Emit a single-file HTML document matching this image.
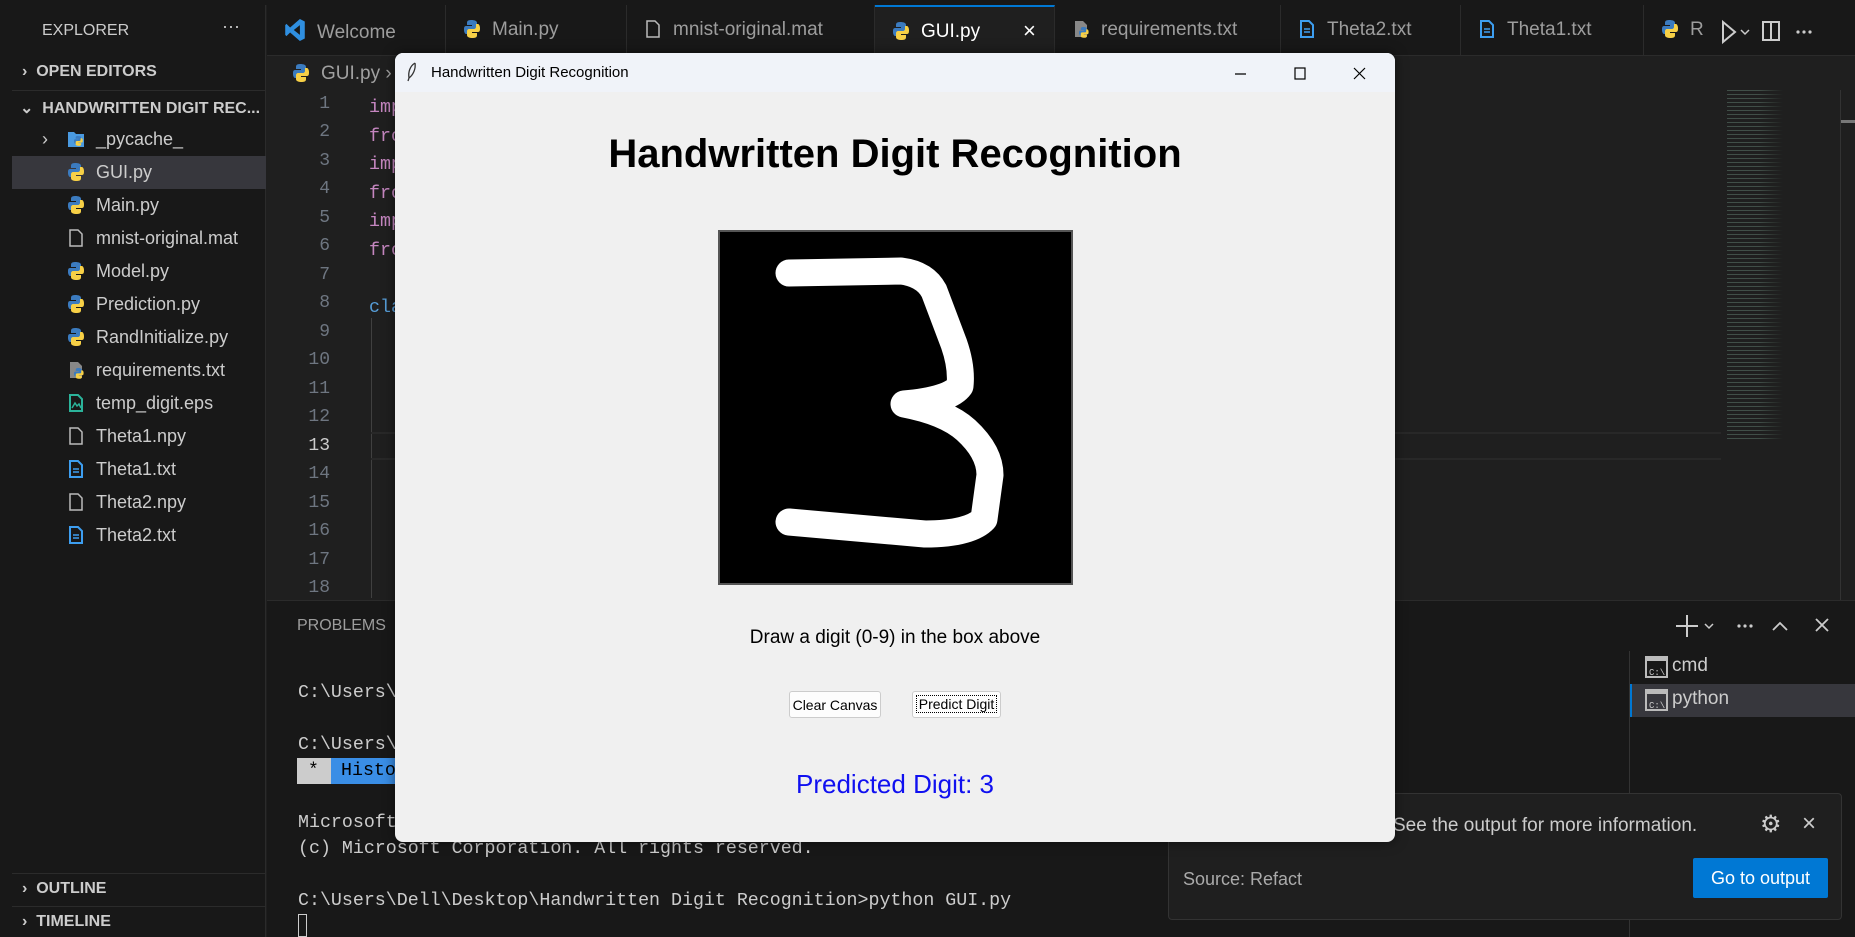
<!DOCTYPE html>
<html><head><meta charset="utf-8"><style>
*{margin:0;padding:0;box-sizing:border-box}
body{width:1855px;height:937px;overflow:hidden;background:#1f1f1f;font-family:"Liberation Sans",sans-serif;position:relative;color:#ccc}
.a{position:absolute}
.t{position:absolute;white-space:nowrap}
.py{display:inline-block;width:16px;height:18px;vertical-align:-3px;margin-right:12px}
.sb{font-size:18px;color:#ccc}
.ln{position:absolute;right:0;width:60px;text-align:right;font-family:"Liberation Mono",monospace;font-size:18px;color:#6e7681}
.mono{font-family:"Liberation Mono",monospace;font-size:18.3px;color:#ccc}
.tab{position:absolute;top:5px;height:51px;border-right:1px solid #2b2b2b;font-size:19px;color:#9d9d9d;padding:14px 0 0 18px;white-space:nowrap}
</style></head><body>
<svg width="0" height="0" style="position:absolute"><defs>
<g id="py"><path d="M7 0C3 0 3 2 3 3v2h5v1H2C0 6 0 8 0 10s1 4 2 4h2v-3c0-1 1-2 2-2h5c1 0 2-1 2-2V3c0-2-2-3-6-3z" fill="#3b7bbf"/><path d="M9 18c4 0 4-2 4-3v-2H8v-1h6c2 0 2-2 2-4s-1-4-2-4h-2v3c0 1-1 2-2 2H5c-1 0-2 1-2 2v4c0 2 2 3 6 3z" fill="#f7d046"/></g>
<g id="fi"><path d="M2 1h8l4 4v12H2z" fill="none" stroke="#bbb" stroke-width="1.5"/></g>
<g id="tx"><path d="M2 1h8l4 4v12H2z" fill="none" stroke="#3d9ef0" stroke-width="2"/><path d="M5 9h6M5 12h6" stroke="#3d9ef0" stroke-width="1.5"/></g>
</defs></svg>
<div class="a" style="left:0;top:0;width:1855px;height:5px;background:#181818"></div>
<div class="a" style="left:0;top:0;width:12px;height:937px;background:#181818"></div>
<div class="a" style="left:12px;top:5px;width:254px;height:932px;background:#181818;border-right:1px solid #2b2b2b"></div>
<div class="t" style="left:42px;top:22px;font-size:16px;color:#ccc">EXPLORER</div>
<div class="t" style="left:222px;top:16px;font-size:18px;color:#ccc">···</div>
<div class="a" style="left:12px;top:90px;width:254px;height:1px;background:#2b2b2b"></div>
<div class="t" style="left:22px;top:63px;font-size:16px;font-weight:bold;color:#ccc">›&nbsp; OPEN EDITORS</div>
<div class="t" style="left:20px;top:98px;font-size:16px;font-weight:bold;color:#ccc">⌄&nbsp; HANDWRITTEN DIGIT REC...</div>
<div class="a" style="left:12px;top:156px;width:254px;height:33px;background:#37373d"></div>
<div class="t sb" style="left:42px;top:129px">›</div>
<div class="t sb" style="left:68px;top:129px"><svg class="py" viewBox="0 0 16 18"><path d="M0 2h6l2 2h8v13H0z" fill="#4a9ae0"/><use href="#py" transform="translate(6 6) scale(.55)"/></svg>_pycache_</div>
<div class="t sb" style="left:68px;top:162px"><svg class="py" viewBox="0 0 16 18"><use href="#py"/></svg>GUI.py</div>
<div class="t sb" style="left:68px;top:195px"><svg class="py" viewBox="0 0 16 18"><use href="#py"/></svg>Main.py</div>
<div class="t sb" style="left:68px;top:228px"><svg class="py" viewBox="0 0 16 18"><use href="#fi"/></svg>mnist-original.mat</div>
<div class="t sb" style="left:68px;top:261px"><svg class="py" viewBox="0 0 16 18"><use href="#py"/></svg>Model.py</div>
<div class="t sb" style="left:68px;top:294px"><svg class="py" viewBox="0 0 16 18"><use href="#py"/></svg>Prediction.py</div>
<div class="t sb" style="left:68px;top:327px"><svg class="py" viewBox="0 0 16 18"><use href="#py"/></svg>RandInitialize.py</div>
<div class="t sb" style="left:68px;top:360px"><svg class="py" viewBox="0 0 16 18"><path d="M2 1h8l4 4v12H2z" fill="#888"/><use href="#py" transform="translate(6 7) scale(.6)"/></svg>requirements.txt</div>
<div class="t sb" style="left:68px;top:393px"><svg class="py" viewBox="0 0 16 18"><path d="M2 1h8l4 4v12H2z" fill="none" stroke="#2bb39a" stroke-width="2"/><path d="M4 14l3-5 2 3 2-2 2 4" stroke="#2bb39a" fill="none" stroke-width="1.5"/></svg>temp_digit.eps</div>
<div class="t sb" style="left:68px;top:426px"><svg class="py" viewBox="0 0 16 18"><use href="#fi"/></svg>Theta1.npy</div>
<div class="t sb" style="left:68px;top:459px"><svg class="py" viewBox="0 0 16 18"><use href="#tx"/></svg>Theta1.txt</div>
<div class="t sb" style="left:68px;top:492px"><svg class="py" viewBox="0 0 16 18"><use href="#fi"/></svg>Theta2.npy</div>
<div class="t sb" style="left:68px;top:525px"><svg class="py" viewBox="0 0 16 18"><use href="#tx"/></svg>Theta2.txt</div>
<div class="a" style="left:12px;top:873px;width:254px;height:1px;background:#2b2b2b"></div>
<div class="a" style="left:12px;top:906px;width:254px;height:1px;background:#2b2b2b"></div>
<div class="t" style="left:22px;top:880px;font-size:16px;font-weight:bold;color:#ccc">›&nbsp; OUTLINE</div>
<div class="t" style="left:22px;top:913px;font-size:16px;font-weight:bold;color:#ccc">›&nbsp; TIMELINE</div>
<div class="a" style="left:267px;top:5px;width:1588px;height:51px;background:#181818;border-bottom:1px solid #2b2b2b"></div>
<div class="tab" style="left:267px;width:179px"><svg class="py" viewBox="0 0 16 18" style="width:20px;height:22px"><path d="M12 0l4 2v14l-4 2L4 11 1 14 0 13V5l1-1 3 3zM12 5L7 9l5 4z" fill="#2f8fe0"/></svg>Welcome</div>
<div class="tab" style="left:446px;width:181px"><svg class="py" viewBox="0 0 16 18"><use href="#py"/></svg>Main.py</div>
<div class="tab" style="left:627px;width:248px"><svg class="py" viewBox="0 0 16 18"><use href="#fi"/></svg>mnist-original.mat</div>
<div class="tab" style="left:875px;width:180px;background:#1f1f1f;color:#fff;border-top:2px solid #0078d4;height:52px"><svg class="py" viewBox="0 0 16 18"><use href="#py"/></svg>GUI.py<span style="position:absolute;left:148px;top:11px;font-size:22px">×</span></div>
<div class="tab" style="left:1055px;width:226px"><svg class="py" viewBox="0 0 16 18"><path d="M2 1h8l4 4v12H2z" fill="#888"/><use href="#py" transform="translate(6 7) scale(.6)"/></svg>requirements.txt</div>
<div class="tab" style="left:1281px;width:180px"><svg class="py" viewBox="0 0 16 18"><use href="#tx"/></svg>Theta2.txt</div>
<div class="tab" style="left:1461px;width:183px"><svg class="py" viewBox="0 0 16 18"><use href="#tx"/></svg>Theta1.txt</div>
<div class="tab" style="left:1644px;width:211px;border:none"><svg class="py" viewBox="0 0 16 18"><use href="#py"/></svg>R</div>
<svg class="a" style="left:1716px;top:18px" width="140" height="28"><path d="M7 4l12 10-12 10z" fill="none" stroke="#ccc" stroke-width="2"/><path d="M25 12l4 4 4-4" fill="none" stroke="#ccc" stroke-width="1.5"/><rect x="47" y="4" width="16" height="18" fill="none" stroke="#ccc" stroke-width="2"/><path d="M55 4v18" stroke="#ccc" stroke-width="2"/><circle cx="82" cy="14" r="1.6" fill="#ccc"/><circle cx="88" cy="14" r="1.6" fill="#ccc"/><circle cx="94" cy="14" r="1.6" fill="#ccc"/></svg>
<div class="t" style="left:293px;top:63px;font-size:19px;color:#a0a0a0"><svg class="py" viewBox="0 0 16 18"><use href="#py"/></svg>GUI.py ›</div>
<div class="a" style="left:270px;top:92px;width:60px;height:508px">
<div class="ln" style="top:2px">1</div><div class="ln" style="top:30px">2</div><div class="ln" style="top:59px">3</div><div class="ln" style="top:87px">4</div><div class="ln" style="top:116px">5</div><div class="ln" style="top:144px">6</div><div class="ln" style="top:173px">7</div><div class="ln" style="top:201px">8</div><div class="ln" style="top:230px">9</div><div class="ln" style="top:258px">10</div><div class="ln" style="top:287px">11</div><div class="ln" style="top:315px">12</div><div class="ln" style="top:344px;color:#ccc">13</div><div class="ln" style="top:372px">14</div><div class="ln" style="top:401px">15</div><div class="ln" style="top:429px">16</div><div class="ln" style="top:458px">17</div><div class="ln" style="top:486px">18</div>
</div>
<div class="t mono" style="left:369px;top:94px;color:#c586c0;line-height:28.5px">imp<br>fro<br>imp<br>fro<br>imp<br>fro<br><br><span style="color:#569cd6">cla</span></div>
<div class="a" style="left:371px;top:318px;width:1px;height:280px;background:#404040"></div>
<div class="a" style="left:371px;top:432px;width:1350px;height:2px;background:#282828"></div>
<div class="a" style="left:371px;top:458px;width:1350px;height:2px;background:#282828"></div>
<div class="a" style="left:1727px;top:90px;width:80px;height:350px;opacity:.45;background:repeating-linear-gradient(180deg,#6a8a7a 0 1px,transparent 1px 4px);-webkit-mask:linear-gradient(90deg,#000 0 40%,transparent 70%)"></div>
<div class="a" style="left:1840px;top:90px;width:15px;height:510px;background:#1f1f1f;border-left:1px solid #333"></div>
<div class="a" style="left:1841px;top:120px;width:14px;height:3px;background:#777"></div>
<div class="a" style="left:267px;top:600px;width:1588px;height:337px;background:#181818;border-top:1px solid #2b2b2b"></div>
<div class="t" style="left:297px;top:617px;font-size:16px;color:#9d9d9d">PROBLEMS</div>
<div class="t mono" style="left:298px;top:683px">C:\Users\</div>
<div class="t mono" style="left:298px;top:735px">C:\Users\</div>
<div class="a" style="left:297px;top:758px;width:34px;height:26px;background:#ccc;color:#000;font-family:'Liberation Mono';font-size:18px;padding:3px 0 0 11px">*</div>
<div class="a mono" style="left:331px;top:758px;width:80px;height:26px;background:#3a8ee6;color:#000;padding:3px 0 0 10px">Histo</div>
<div class="t mono" style="left:298px;top:813px">Microsoft</div>
<div class="t mono" style="left:298px;top:839px">(c) Microsoft Corporation. All rights reserved.</div>
<div class="t mono" style="left:298px;top:891px">C:\Users\Dell\Desktop\Handwritten Digit Recognition&gt;python GUI.py</div>
<div class="a" style="left:298px;top:914px;width:9px;height:23px;border:1px solid #ccc"></div>
<svg class="a" style="left:1675px;top:610px" width="175" height="32"><path d="M12 5v22M1 16h22" stroke="#ccc" stroke-width="2"/><path d="M30 14l4 4 4-4" fill="none" stroke="#ccc" stroke-width="1.5"/><circle cx="64" cy="16" r="1.6" fill="#ccc"/><circle cx="70" cy="16" r="1.6" fill="#ccc"/><circle cx="76" cy="16" r="1.6" fill="#ccc"/><path d="M98 20l7-7 7 7" fill="none" stroke="#ccc" stroke-width="1.8"/><path d="M141 9l12 12M153 9l-12 12" stroke="#ccc" stroke-width="1.8"/></svg>
<div class="a" style="left:1629px;top:651px;width:1px;height:286px;background:#333"></div>
<div class="a" style="left:1630px;top:684px;width:225px;height:33px;background:#37373d;border-left:2px solid #0078d4"></div>
<div class="t" style="left:1645px;top:655px;font-size:19px;color:#ccc"><span style="display:inline-block;width:23px;height:22px;border:2px solid #bbb;font-size:9px;vertical-align:-4px;margin-right:4px;padding:7px 0 0 2px;border-top-width:5px;font-family:'Liberation Mono'">C:\</span>cmd</div>
<div class="t" style="left:1645px;top:688px;font-size:19px;color:#ccc"><span style="display:inline-block;width:23px;height:22px;border:2px solid #bbb;font-size:9px;vertical-align:-4px;margin-right:4px;padding:7px 0 0 2px;border-top-width:5px;font-family:'Liberation Mono'">C:\</span>python</div>
<div class="a" style="left:1168px;top:793px;width:674px;height:127px;background:#1f1f1f;border:1px solid #333;border-radius:4px"></div>
<div class="t" style="left:1393px;top:815px;font-size:19px;color:#ccc">See the output for more information.</div>
<div class="t" style="left:1760px;top:810px;font-size:24px;color:#ccc">⚙</div>
<div class="t" style="left:1802px;top:810px;font-size:24px;color:#ccc">×</div>
<div class="t" style="left:1183px;top:869px;font-size:18px;color:#aaa">Source: Refact</div>
<div class="a" style="left:1693px;top:858px;width:135px;height:40px;background:#0078d4;border-radius:2px;color:#fff;font-size:18px;text-align:center;padding-top:10px">Go to output</div>
<div class="a" style="left:395px;top:53px;width:1000px;height:789px;background:#f0f0f0;border-radius:8px;overflow:hidden;box-shadow:0 0 12px rgba(0,0,0,.5)">
<div class="a" style="left:0;top:0;width:1000px;height:39px;background:#f0f3f9"></div>
<svg class="a" style="left:11px;top:9px" width="12" height="20"><path d="M9 1C4 4 2 10 3 16L2 19M9 1c1 6-2 12-6 15" fill="none" stroke="#333" stroke-width="1.3"/></svg>
<div class="t" style="left:36px;top:11px;font-size:15px;color:#000">Handwritten Digit Recognition</div>
<svg class="a" style="left:840px;top:10px" width="160" height="22"><path d="M0 11h11" stroke="#000" stroke-width="1.2"/><rect x="60" y="5" width="10" height="11" fill="none" stroke="#000" stroke-width="1.2"/><path d="M119 5l11 11M130 5l-11 11" stroke="#000" stroke-width="1.2"/></svg>
<div class="t" style="left:0;width:1000px;text-align:center;top:79px;font-size:40px;font-weight:bold;color:#000">Handwritten Digit Recognition</div>
<div class="a" style="left:323px;top:177px;width:355px;height:355px;background:#000;border:2px solid #555">
<svg width="351" height="351"><path d="M69 41L181 39Q205 42 214 59L234 112Q242 135 240 154Q230 168 184 172Q226 180 246 198Q270 220 270 243L264 287Q250 302 205 302L69 290" fill="none" stroke="#fff" stroke-width="27" stroke-linecap="round" stroke-linejoin="round"/></svg>
</div>
<div class="t" style="left:0;width:1000px;text-align:center;top:574px;font-size:19px;color:#000">Draw a digit (0-9) in the box above</div>
<div class="a" style="left:394px;top:638px;width:92px;height:27px;background:#fdfdfd;border:1px solid #ccc;border-radius:3px;font-size:14px;color:#000;text-align:center;padding-top:5px;white-space:nowrap">Clear Canvas</div>
<div class="a" style="left:517px;top:638px;width:89px;height:27px;background:#fdfdfd;border:1px solid #ccc;border-radius:3px;font-size:14px;color:#000;text-align:center;padding-top:4px;white-space:nowrap"><span style="border:1px dotted #000;padding:0 2px">Predict Digit</span></div>
<div class="t" style="left:0;width:1000px;text-align:center;top:716px;font-size:26px;color:#1010f0">Predicted Digit: 3</div>
</div>
</body></html>
